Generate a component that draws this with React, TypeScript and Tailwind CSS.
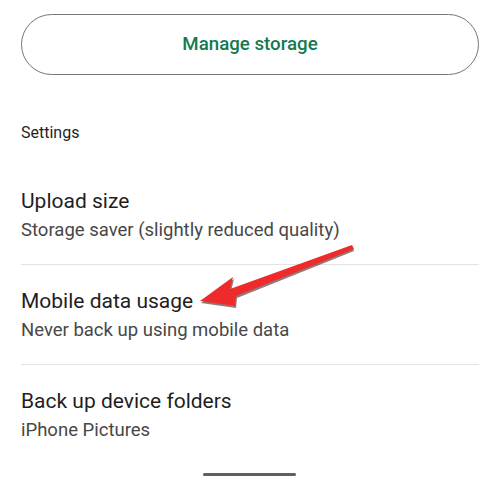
import React from "react";

interface SettingRow {
  title: string;
  subtitle: string;
}

const ROWS: SettingRow[] = [
  { title: "Upload size", subtitle: "Storage saver (slightly reduced quality)" },
  { title: "Mobile data usage", subtitle: "Never back up using mobile data" },
  { title: "Back up device folders", subtitle: "iPhone Pictures" },
];

function Row({ row, last }: { row: SettingRow; last: boolean }) {
  return (
    <div className={last ? "pt-[22px]" : "pt-[22px] pb-[22px] border-b border-[#e3e3e3]"}>
      <div className="text-[21px] leading-[28px] text-[#1f1f1f]">{row.title}</div>
      <div className="mt-[3px] text-[18.5px] leading-[24px] text-[#474747]">{row.subtitle}</div>
    </div>
  );
}

export default function App() {
  return (
    <div
      className="relative w-[500px] h-[485px] overflow-hidden bg-white"
      style={{ fontFamily: "Roboto, 'Liberation Sans', sans-serif" }}
    >
      <div className="flex flex-col px-[21px] pt-[14px]">
        <button className="h-[61px] w-full rounded-full border border-[#767676] text-[18.7px] font-medium text-[#137a4f]">
          Manage storage
        </button>
        <div className="mt-[48px] text-[16px] leading-[20px] text-[#1f1f1f]">Settings</div>
        <div className="mt-[22px]">
          {ROWS.map((r, i) => (
            <Row key={r.title} row={r} last={i === ROWS.length - 1} />
          ))}
        </div>
      </div>

      {/* home indicator */}
      <div className="absolute bottom-[9px] left-[203px] h-[3px] w-[93px] rounded-full bg-[#5f5f5f]" />

      {/* annotation arrow */}
      <svg className="absolute inset-0" width="500" height="485" viewBox="0 0 500 485">
        <polygon
          points="201,303 234,279 231,291 353,248 354,251 237,298 236,308"
          fill="#3a0a0a"
          opacity="0.55"
        />
        <polygon
          points="200,301 233,277 230,289 352,245 354,249 236,296 235,306"
          fill="#ee2a2a"
        />
      </svg>
    </div>
  );
}
